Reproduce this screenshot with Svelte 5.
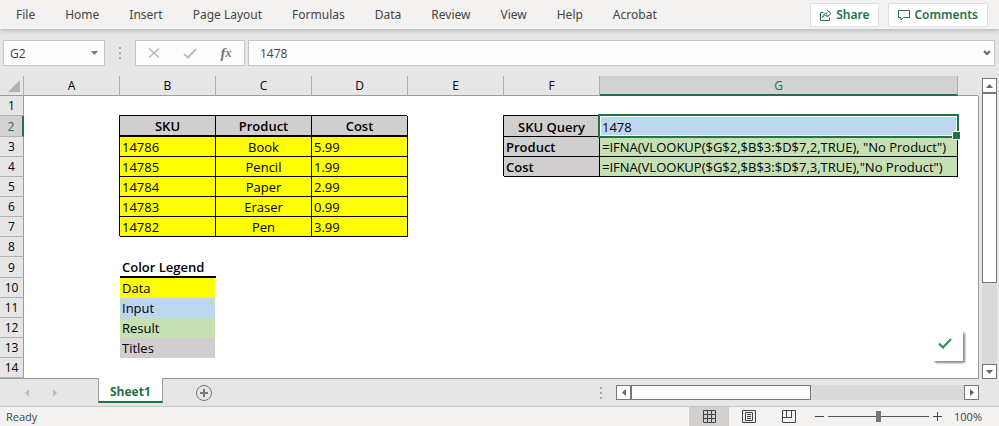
<script>
    let menus = ['File', 'Home', 'Insert', 'Page Layout', 'Formulas', 'Data', 'Review', 'View', 'Help', 'Acrobat'];
    let columns = ['A', 'B', 'C', 'D', 'E', 'F', 'G'];

    let selected = 'G2';
    let formula = '1478';
    let zoom = 100;

    // cell contents by address: text and style classes
    let cells = {
        B2: { text: 'SKU', cls: 'box title thick center' },
        C2: { text: 'Product', cls: 'box title thick center' },
        D2: { text: 'Cost', cls: 'box title thick center' },
        F2: { text: 'SKU Query', cls: 'box title center' },
        G2: { text: '1478', cls: 'input active' },
        F3: { text: 'Product', cls: 'box title' },
        G3: { text: '=IFNA(VLOOKUP($G$2,$B$3:$D$7,2,TRUE), "No Product")', cls: 'box result' },
        F4: { text: 'Cost', cls: 'box title' },
        G4: { text: '=IFNA(VLOOKUP($G$2,$B$3:$D$7,3,TRUE),"No Product")', cls: 'box result' },
        B9: { text: 'Color Legend', cls: 'heading' },
        B10: { text: 'Data', cls: 'legend data' },
        B11: { text: 'Input', cls: 'legend input' },
        B12: { text: 'Result', cls: 'legend result' },
        B13: { text: 'Titles', cls: 'legend titles' }
    };

    const products = [
        ['14786', 'Book', '5.99'],
        ['14785', 'Pencil', '1.99'],
        ['14784', 'Paper', '2.99'],
        ['14783', 'Eraser', '0.99'],
        ['14782', 'Pen', '3.99']
    ];

    products.forEach(([sku, name, cost], i) => {
        cells['B' + (i + 3)] = { text: sku, cls: 'box data' };
        cells['C' + (i + 3)] = { text: name, cls: 'box data center' };
        cells['D' + (i + 3)] = { text: cost, cls: 'box data' };
    });

    const rows = Array.from({ length: 14 }, (_, i) => i + 1);
</script>

<div class="app">
    <header class="menubar">
        <nav>
            {#each menus as menu}
                <button>{menu}</button>
            {/each}
        </nav>
        <div class="actions">
            <button class="action">
                <svg width="12" height="12" viewBox="0 0 12 12">
                    <path d="M3.5 3.5h-3v8h9v-3M2.5 8.5c.5-3 2-4.500 5-4.500M7 1l4 3.500L7 8V6C5 6 3.500 7 2.500 8.500" />
                </svg>
                Share
            </button>
            <button class="action">
                <svg width="12" height="12" viewBox="0 0 12 12">
                    <path d="M.5 1.500h11v7h-6l-2.500 2.500v-2.500h-2.500z" />
                </svg>
                Comments
            </button>
        </div>
    </header>

    <div class="formula-bar">
        <div class="name-box">
            <input aria-label="Name box" bind:value={selected} />
            <button aria-label="Show names">
                <svg width="7" height="4" viewBox="0 0 7 4"><path d="M0 0h7L3.500 4z" fill="#777" /></svg>
            </button>
        </div>
        <span class="grip"><i></i><i></i><i></i></span>
        <div class="tools">
            <button aria-label="Cancel">
                <svg width="12" height="10" viewBox="0 0 12 10"><path d="M1 .5l10 9M11 .5l-10 9" stroke="#bdbdbd" stroke-width="1.600" fill="none" /></svg>
            </button>
            <button aria-label="Enter">
                <svg width="14" height="11" viewBox="0 0 14 11"><path d="M1 6l4 3.500L13 1" stroke="#bdbdbd" stroke-width="2" fill="none" /></svg>
            </button>
            <button class="fx" aria-label="Insert function">f<small>x</small></button>
        </div>
        <div class="formula">
            <input aria-label="Formula" bind:value={formula} />
            <button aria-label="Expand formula bar">
                <svg width="8" height="6" viewBox="0 0 8 6"><path d="M1 1l3 3 3-3" stroke="#666" stroke-width="2" fill="none" /></svg>
            </button>
        </div>
    </div>

    <main class="workspace">
        <div class="sheet">
            <table>
                <colgroup>
                    <col class="col-num" />
                    {#each columns as col}
                        <col class={col === 'G' ? 'col-wide' : 'col'} />
                    {/each}
                    <col />
                </colgroup>
                <thead>
                    <tr>
                        <th class="corner"><svg width="12" height="12" viewBox="0 0 12 12"><path d="M12 0v12H0z" fill="#b4b4b4" /></svg></th>
                        {#each columns as col}
                            <th class:current={col === 'G'}>{col}</th>
                        {/each}
                        <th class="rest"></th>
                    </tr>
                </thead>
                <tbody>
                    {#each rows as row}
                        <tr class:tall={row === 2 || row === 9}>
                            <th class:current={row === 2}>{row}</th>
                            {#each columns as col}
                                <td class={cells[col + row]?.cls}>{cells[col + row]?.text ?? ''}</td>
                            {/each}
                            <td></td>
                        </tr>
                    {/each}
                </tbody>
            </table>
            <button class="popup" aria-label="Done">
                <svg width="14" height="11" viewBox="0 0 14 11"><path d="M1 5.500l4 4L13 1" stroke="#1e9350" stroke-width="2" fill="none" /></svg>
            </button>
        </div>
        <div class="vscroll">
            <button aria-label="Scroll up"><svg width="7" height="4" viewBox="0 0 7 4"><path d="M0 4h7L3.500 0z" /></svg></button>
            <div class="thumb"></div>
            <div class="track"></div>
            <button aria-label="Scroll down"><svg width="7" height="4" viewBox="0 0 7 4"><path d="M0 0h7L3.500 4z" /></svg></button>
        </div>
    </main>

    <div class="tabs">
        <div class="tab-nav">
            <button aria-label="Previous sheet"><svg width="4" height="8" viewBox="0 0 4 8"><path d="M4 0v8L0 4z" fill="#bdbdbd" /></svg></button>
            <button aria-label="Next sheet"><svg width="4" height="8" viewBox="0 0 4 8"><path d="M0 0v8l4-4z" fill="#bdbdbd" /></svg></button>
        </div>
        <button class="tab">Sheet1</button>
        <button class="add" aria-label="New sheet">
            <svg width="16" height="16" viewBox="0 0 16 16">
                <circle cx="8" cy="8" r="7.500" fill="none" stroke="#777" />
                <path d="M8 4v8M4 8h8" stroke="#777" stroke-width="2" />
            </svg>
        </button>
        <span class="grip"><i></i><i></i><i></i></span>
        <div class="hscroll">
            <button aria-label="Scroll left"><svg width="4" height="7" viewBox="0 0 4 7"><path d="M4 0v7L0 3.500z" /></svg></button>
            <div class="thumb"></div>
            <div class="track"></div>
            <button aria-label="Scroll right"><svg width="4" height="7" viewBox="0 0 4 7"><path d="M0 0v7l4-3.500z" /></svg></button>
        </div>
    </div>

    <footer class="status">
        <span class="ready">Ready</span>
        <div class="views">
            <button class="on" aria-label="Normal view">
                <svg width="13" height="13" viewBox="0 0 13 13"><path d="M.5.5h12v12H.5zM4.500 0v13M8.500 0v13M0 4.500h13M0 8.500h13" /></svg>
            </button>
            <button aria-label="Page layout view">
                <svg width="14" height="13" viewBox="0 0 14 13"><path d="M.5.5h13v12H.5zM3.500 2.500h7v8h-7zM5 4.500h4M5 6.500h4M5 8.500h4" /></svg>
            </button>
            <button aria-label="Page break view">
                <svg width="14" height="13" viewBox="0 0 14 13"><path d="M.5.5h13v12H.5zM4.500 0v7M9.500 0v7M0 7.500h10" /></svg>
            </button>
        </div>
        <div class="zoom">
            <button aria-label="Zoom out"><svg width="9" height="9" viewBox="0 0 9 9"><path d="M0 4.500h9" /></svg></button>
            <input type="range" min="0" max="200" aria-label="Zoom" bind:value={zoom} />
            <button aria-label="Zoom in"><svg width="9" height="9" viewBox="0 0 9 9"><path d="M0 4.500h9M4.500 0v9" /></svg></button>
            <span class="percent">{zoom}%</span>
        </div>
    </footer>
</div>

<style>
    :global(body) {
        margin: 0;
        background: #e6e6e6;
    }

    .app {
        font-family: "Open Sans", "Noto Sans", sans-serif;
        font-size: 12px;
        color: #444;
        background: #e6e6e6;
    }

    .app * {
        box-sizing: border-box;
    }

    button {
        display: flex;
        align-items: center;
        justify-content: center;
        padding: 0;
        border: 0;
        background: none;
        font: inherit;
        color: inherit;
    }

    input {
        min-width: 0;
        padding: 0;
        border: 0;
        background: none;
        font: inherit;
        color: inherit;
        outline: none;
    }

    svg {
        display: block;
    }

    .menubar {
        display: flex;
        justify-content: space-between;
        height: 29px;
        padding: 0 11px 0 16px;
        background: #f3f2f1;
        box-shadow: 0 1px 5px #aaa;
        font-family: "Noto Sans", sans-serif;
    }

    nav {
        display: flex;
        gap: 30px;
    }

    .actions {
        display: flex;
        align-items: center;
        gap: 9px;
    }

    .action {
        gap: 4px;
        height: 24px;
        padding: 0 9px;
        border: 1px solid #e1dfdd;
        border-radius: 2px;
        background: #fff;
        color: #217346;
        font-weight: 600;
    }

    .action svg {
        fill: none;
        stroke: #217346;
    }

    .formula-bar {
        display: flex;
        height: 47px;
        padding: 11px 4px 10px 3px;
    }

    .name-box,
    .tools,
    .formula {
        display: flex;
        align-items: center;
        border: 1px solid #c6c6c6;
        background: #fdfdfd;
    }

    .name-box {
        width: 102px;
        padding: 0 6px;
    }

    .name-box input,
    .formula input {
        flex: 1;
    }

    .grip {
        display: flex;
        flex-direction: column;
        align-items: center;
        justify-content: center;
        gap: 3px;
        width: 30px;
    }

    .grip i {
        width: 2px;
        height: 2px;
        background: #aaa;
    }

    .tools {
        width: 110px;
        margin-right: 3px;
    }

    .tools button {
        flex: 1;
    }

    .tools .fx {
        font: italic bold 15px "Liberation Serif", serif;
        color: #777;
    }

    .fx small {
        font-size: 12px;
    }

    .formula {
        flex: 1;
        padding: 0 3px 0 11px;
    }

    .workspace {
        display: flex;
    }

    .sheet {
        position: relative;
        flex: 1;
        border-right: 1px solid #9b9b9b;
        border-bottom: 1px solid #9b9b9b;
        background: #fff;
    }

    table {
        width: 100%;
        table-layout: fixed;
        border-spacing: 0;
        color: #000;
    }

    .col-num {
        width: 24px;
    }

    .col {
        width: 96px;
    }

    .col-wide {
        width: 358px;
    }

    th,
    td {
        height: 20px;
        padding: 1px 0 0;
        line-height: 18px;
        white-space: nowrap;
    }

    .tall th,
    .tall td {
        height: 21px;
    }

    th {
        background: #e6e6e6;
        font-weight: normal;
    }

    thead th {
        border-right: 1px solid #b0b0b0;
        border-bottom: 1px solid #9b9b9b;
    }

    thead .current {
        border-bottom: 2px solid #217346;
        background: #d2d2d2;
        color: #217346;
        line-height: 17px;
    }

    thead .rest {
        border-right: 0;
        box-shadow: 1px 0 0 #e6e6e6;
    }

    .corner svg {
        margin-left: 8px;
    }

    tbody th {
        border-right: 1px solid #9b9b9b;
        border-bottom: 1px solid #b0b0b0;
    }

    tbody th.current {
        border-right: 2px solid #217346;
        background: #d2d2d2;
        color: #217346;
    }

    td {
        padding: 1px 2px 0;
        font-size: 13px;
    }

    .box {
        border-right: 1px solid #000;
        border-bottom: 1px solid #000;
        box-shadow: -1px -1px 0 #000;
    }

    .thick {
        border-bottom-width: 2px;
    }

    .center {
        text-align: center;
    }

    .title {
        background: #d0cece;
        font-weight: 600;
    }

    .titles {
        background: #d0cece;
    }

    .data {
        background: #ff0;
    }

    .input {
        background: #bdd7ee;
    }

    .result {
        background: #c6e0b4;
    }

    .heading {
        border-bottom: 2px solid #000;
        font-weight: 600;
    }

    .legend {
        padding-bottom: 1px;
        border-right: 1px solid #fff;
    }

    /* selection frame with its fill handle */
    .active {
        position: relative;
        padding-bottom: 1px;
    }

    .active::before {
        content: '';
        position: absolute;
        inset: -2px -1px -1px -2px;
        border: 2px solid #217346;
        box-shadow: inset 0 0 0 1px #fff;
    }

    .active::after {
        content: '';
        position: absolute;
        right: -3px;
        bottom: -3px;
        width: 7px;
        height: 7px;
        border: 1px solid #fff;
        background: #217346;
    }

    .popup {
        position: absolute;
        right: 15px;
        bottom: 17px;
        width: 30px;
        height: 30px;
        padding-bottom: 6px;
        padding-right: 6px;
        background: #fff;
        box-shadow: 2px 2px 2px #888;
    }

    .vscroll {
        display: flex;
        flex-direction: column;
        width: 20px;
        padding: 2px 2px 0 3px;
    }

    .vscroll button,
    .hscroll button {
        width: 15px;
        height: 15px;
        border: 1px solid #777;
        background: #fff;
    }

    .vscroll svg,
    .hscroll svg {
        fill: #666;
    }

    .thumb {
        border: 1px solid #777;
        background: #fff;
    }

    .track {
        background: #dadada;
    }

    .vscroll .thumb {
        flex: 7;
    }

    .vscroll .track {
        flex: 3;
    }

    .tabs {
        display: flex;
        align-items: center;
        height: 28px;
        padding-right: 20px;
        border-bottom: 1px solid #c6c6c6;
    }

    .tab-nav {
        display: flex;
        gap: 24px;
        width: 98px;
        padding-left: 25px;
    }

    .tab {
        align-self: flex-start;
        height: 25px;
        margin-top: -1px;
        padding: 3px 11px 0;
        border: 1px solid #9b9b9b;
        border-top: 0;
        border-bottom: 2px solid #217346;
        background: #fff;
        color: #217346;
        font-weight: 700;
        z-index: 1;
    }

    .add {
        margin: 0 auto 0 33px;
    }

    .hscroll {
        display: flex;
        width: 363px;
        height: 15px;
    }

    .hscroll .thumb {
        width: 180px;
    }

    .hscroll .track {
        flex: 1;
    }

    .status {
        display: flex;
        height: 19px;
        padding: 0 17px 0 6px;
        background: #f3f2f1;
        font-size: 11px;
        line-height: 19px;
    }

    .ready {
        flex: 1;
    }

    .views {
        display: flex;
    }

    .views button {
        width: 40px;
    }

    .views .on {
        background: #d2d0ce;
    }

    .status svg {
        fill: none;
        stroke: #444;
    }

    .zoom {
        display: flex;
        align-items: center;
        gap: 4px;
        margin-left: 6px;
    }

    .zoom input {
        appearance: none;
        width: 101px;
        height: 12px;
        margin: 0;
    }

    .zoom input::-webkit-slider-runnable-track {
        height: 1px;
        background: #555;
    }

    .zoom input::-webkit-slider-thumb {
        appearance: none;
        width: 5px;
        height: 11px;
        margin-top: -5px;
        background: #777;
    }

    .percent {
        margin-left: 8px;
    }
</style>
